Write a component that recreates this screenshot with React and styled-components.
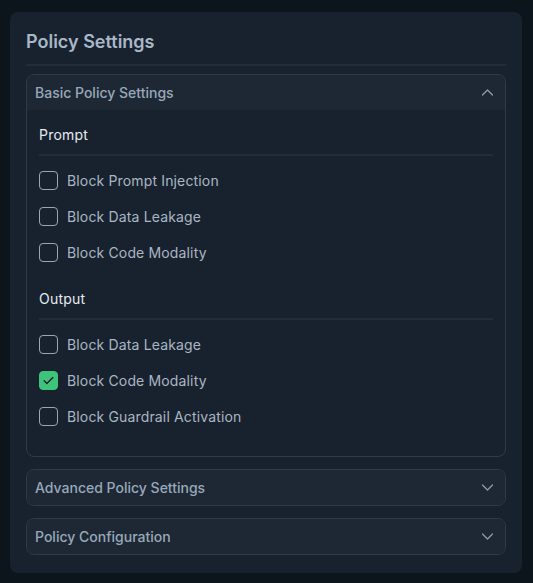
import React, { useState } from "react"
import styled, { createGlobalStyle } from "styled-components"

const GlobalStyle = createGlobalStyle`
  html, body {
    margin: 0;
    padding: 0;
    background: #0c141c;
  }
  body {
    font-family: Inter, "Noto Sans", sans-serif;
  }
  * { box-sizing: border-box; }
`

const Page = styled.div`
  padding: 12px 11px 11px 10px;
`

const Card = styled.section`
  background: #18222e;
  border-radius: 8px;
  padding: 18px 16px 18px;
`

const Title = styled.h2`
  margin: 0;
  font-size: 18px;
  line-height: 24px;
  font-weight: 600;
  color: #a9b8c8;
`

const Divider = styled.div`
  height: 2px;
  background: #222d3a;
  margin: ${(p) => p.$m || "10px 0 8px"};
`

const Stack = styled.div`
  display: flex;
  flex-direction: column;
  gap: 12px;
`

const Panel = styled.div`
  border: 1px solid #2f3b4a;
  border-radius: 8px;
  overflow: hidden;
`

const PanelHead = styled.button`
  all: unset;
  box-sizing: border-box;
  display: flex;
  align-items: center;
  justify-content: space-between;
  width: 100%;
  height: 35px;
  padding: 0 10px 0 8px;
  background: #1e2835;
  cursor: pointer;
  font-family: Inter, "Noto Sans", sans-serif;
  font-size: 14px;
  font-weight: 500;
  color: #98a8ba;
`

const PanelBody = styled.div`
  padding: 15px 12px 22px;
`

const Section = styled.div`
  & + & {
    margin-top: 19px;
  }
`

const SectionLabel = styled.div`
  font-size: 14px;
  line-height: 20px;
  font-weight: 400;
  letter-spacing: 0.2px;
  color: #e6ebf0;
`

const Row = styled.label`
  display: flex;
  align-items: center;
  gap: 9px;
  height: 36px;
  cursor: pointer;
  font-size: 14px;
  letter-spacing: 0.15px;
  color: #a9b6c4;
`

const Box = styled.span`
  width: 19px;
  height: 19px;
  border-radius: 4px;
  border: 1.5px solid ${(p) => (p.$on ? "#3ec47a" : "#9aa6b3")};
  background: ${(p) => (p.$on ? "#3ec47a" : "transparent")};
  display: flex;
  align-items: center;
  justify-content: center;
  flex-shrink: 0;
`

const Chevron = ({ up }) => (
  <svg width="15" height="15" viewBox="0 0 24 24" fill="none" stroke="#8b9cae" strokeWidth="2" strokeLinecap="round" strokeLinejoin="round">
    <path d={up ? "M4 16l8-8 8 8" : "M4 8l8 8 8-8"} />
  </svg>
)

const Check = () => (
  <svg width="13" height="13" viewBox="0 0 24 24" fill="none" stroke="#12202a" strokeWidth="2.5" strokeLinecap="round" strokeLinejoin="round">
    <path d="M4 12.5l5 5L20 6.5" />
  </svg>
)

const groups = [
  { label: "Prompt", items: ["Block Prompt Injection", "Block Data Leakage", "Block Code Modality"] },
  { label: "Output", items: ["Block Data Leakage", "Block Code Modality", "Block Guardrail Activation"] },
]

export default function App() {
  const [checked, setChecked] = useState({ "Output-1": true })
  const toggle = (k) => setChecked((c) => ({ ...c, [k]: !c[k] }))

  return (
    <Page>
      <GlobalStyle />
      <Card>
        <Title>Policy Settings</Title>
        <Divider />
        <Stack>
          <Panel>
            <PanelHead>
              Basic Policy Settings
              <Chevron up />
            </PanelHead>
            <PanelBody>
              {groups.map((g) => (
                <Section key={g.label}>
                  <SectionLabel>{g.label}</SectionLabel>
                  <Divider $m="9px 0 6px" />
                  {g.items.map((it, i) => {
                    const k = `${g.label}-${i}`
                    return (
                      <Row key={k} onClick={() => toggle(k)}>
                        <Box $on={checked[k]}>{checked[k] && <Check />}</Box>
                        {it}
                      </Row>
                    )
                  })}
                </Section>
              ))}
            </PanelBody>
          </Panel>
          <Panel>
            <PanelHead>
              Advanced Policy Settings
              <Chevron />
            </PanelHead>
          </Panel>
          <Panel>
            <PanelHead>
              Policy Configuration
              <Chevron />
            </PanelHead>
          </Panel>
        </Stack>
      </Card>
    </Page>
  )
}
